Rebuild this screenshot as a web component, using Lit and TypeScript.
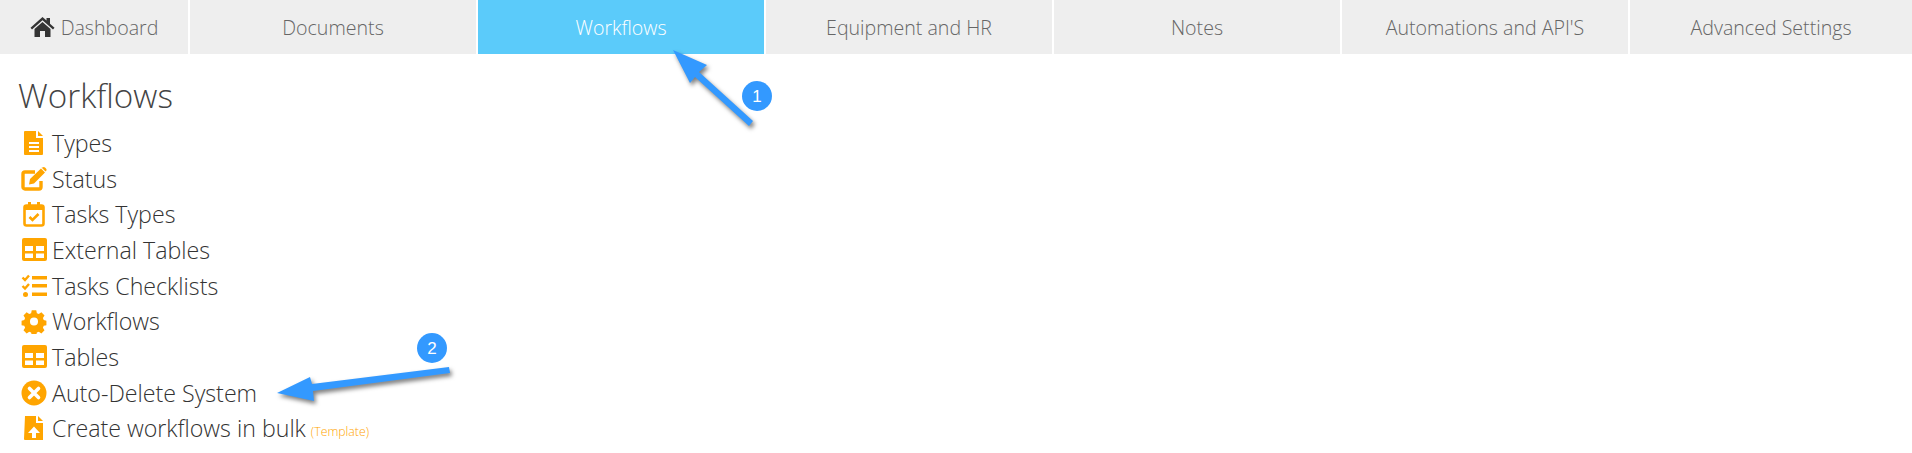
import { LitElement, html, css, svg } from "lit";
import { customElement } from "lit/decorators.js";

const I = (w: number, h: number, c: unknown) =>
  html`<svg class="ico" width=${w} height=${h} viewBox="0 0 ${w} ${h}">${c}</svg>`;

const fileLines = I(26, 26, svg`<path fill-rule="evenodd" d="M4 1h11v7h7v16a1 1 0 0 1-1 1H4a1 1 0 0 1-1-1V2a1 1 0 0 1 1-1zM8 12v2h10v-2zM8 16v2h10v-2zM8 20v2h10v-2z" fill="#ffa500"/><path d="M17 1l5 5h-5z" fill="#ffa500"/>`);
const edit = I(26, 26, svg`<path d="M20 15v6a2 2 0 0 1-2 2H4a2 2 0 0 1-2-2V8a2 2 0 0 1 2-2h10" fill="none" stroke="#ffa500" stroke-width="3.4"/><path d="M9 13L20 2.5l4 4L13 17.5l-5 1zM21.5 1.5a1.8 1.8 0 0 1 2.5 0l1 1a1.8 1.8 0 0 1 0 2.5l-.5.5-4-4z" fill="#ffa500"/>`);
const cal = I(26, 26, svg`<rect x="3.5" y="4.5" width="19" height="20" rx="2" fill="none" stroke="#ffa500" stroke-width="2.6"/><path d="M3 4h20v5H3z" fill="#ffa500"/><path d="M7 1h3v5H7zM16 1h3v5h-3z" fill="#ffa500"/><path d="M8.5 16l3 3 6-6" fill="none" stroke="#ffa500" stroke-width="2.6"/>`);
const table = I(26, 26, svg`<path fill-rule="evenodd" d="M3 1h21a2 2 0 0 1 2 2v19a2 2 0 0 1-2 2H3a2 2 0 0 1-2-2V3a2 2 0 0 1 2-2zM4 9v5h8V9zm11 0v5h8V9zM4 16.500v4.500h8v-4.500zm11 0v4.500h8v-4.500z" fill="#ffa500"/>`);
const checks = I(26, 26, svg`<path d="M1.500 4.500l2.500 2.500 4-4.500M1.500 13l2.500 2.500 4-4.500" fill="none" stroke="#ffa500" stroke-width="2.4"/><circle cx="4.500" cy="21.500" r="2.500" fill="#ffa500"/><path d="M11 3h15v3.500H11zM11 11h15v3.500H11zM11 19.500h15V23H11z" fill="#ffa500"/>`);
const gear = I(26, 26, svg`<path fill-rule="evenodd" d="M10.500 1h5l.7 3.300 2.100.9 2.900-1.800 3.500 3.500-1.800 2.900.9 2.100 3 .7v5l-3 .7-.9 2.100 1.800 2.900-3.500 3.500-2.900-1.800-2.100.9-.7 2.900h-5l-.7-2.900-2.100-.9-2.900 1.800-3.500-3.500 1.800-2.900-.9-2.100-3-.7v-5l3-.7.9-2.100-1.800-2.900 3.500-3.500 2.900 1.800 2.100-.9zM13 9a4.500 4.500 0 1 0 0 9 4.500 4.500 0 0 0 0-9z" fill="#ffa500" transform="translate(1.300 1.300) scale(.9)"/>`);
const xcircle = I(26, 26, svg`<circle cx="13" cy="13" r="12.500" fill="#ffa500"/><path d="M8.500 8.500l9 9M17.500 8.500l-9 9" stroke="#fff" stroke-width="3.600" stroke-linecap="round"/>`);
const fileUp = I(26, 26, svg`<path fill-rule="evenodd" d="M4 1h11v7h7v17H4a1 1 0 0 1-1-1zM13 11.500l-6 6.500h4v5h4v-5h4z" fill="#ffa500"/><path d="M17 1l5 5h-5z" fill="#ffa500"/>`);

const items: [unknown, string][] = [
  [fileLines, "Types"],
  [edit, "Status"],
  [cal, "Tasks Types"],
  [table, "External Tables"],
  [checks, "Tasks Checklists"],
  [gear, "Workflows"],
  [table, "Tables"],
  [xcircle, "Auto-Delete System"],
  [fileUp, "Create workflows in bulk"],
];

@customElement("app-root")
export class AppRoot extends LitElement {
  static styles = css`
    :host {
      display: block;
      position: relative;
      width: 1912px;
      height: 453px;
      overflow: hidden;
      background: #fff;
      font-family: "Open Sans", "Noto Sans", sans-serif;
      font-weight: 300;
      color: #333;
    }
    .tabs {
      display: grid;
      grid-template-columns: 188px repeat(5, 286px) 1fr;
      column-gap: 2px;
      height: 54px;
    }
    .tab {
      background: #eeeeee;
      color: #666;
      display: flex;
      align-items: center;
      justify-content: center;
      font-size: 19.6px;
      gap: 6px;
    }
    .tab.active {
      background: #5bcbfa;
      color: #fff;
    }
    .home {
      display: block;
    }
    .main {
      padding: 16px 0 0 18px;
    }
    h1 {
      margin: 0;
      font-size: 33.3px;
      font-weight: 300;
      line-height: 50px;
      color: #444;
    }
    .list {
      margin-top: 5px;
    }
    .row {
      display: flex;
      align-items: center;
      height: 35.7px;
      font-size: 23.2px;
      color: #333;
      white-space: nowrap;
    }
    .ico {
      display: block;
      flex: none;
      margin: 0 5px 0 3px;
    }
    .tpl {
      font-size: 12.3px;
      color: #ffa500;
      margin: 6px 0 0 5px;
    }
    .marks {
      position: absolute;
      left: 0;
      top: 0;
      pointer-events: none;
    }
    .arrow {
      filter: drop-shadow(2px 3px 2px rgba(0, 0, 0, 0.5));
    }
    .num {
      fill: #fff;
      font-family: "Liberation Sans", sans-serif;
      font-size: 17px;
      text-anchor: middle;
    }
  `;

  render() {
    const tabs = ["Documents", "Workflows", "Equipment and HR", "Notes", "Automations and API'S", "Advanced Settings"];
    return html`
      <div class="tabs">
        <div class="tab">
          <svg class="home" width="25" height="20" viewBox="0 0 25 20">
            <path d="M12.500 0l4 3.600V1h3.500v5.800l4.500 4-1.500 1.700L12.500 3.200 2 12.500.5 10.800z" fill="#333"/>
            <path d="M12.500 5l8 7v8h-5.500v-6h-5v6H4.500v-8z" fill="#333"/>
          </svg>
          <span>Dashboard</span>
        </div>
        ${tabs.map((t) => html`<div class="tab ${t === "Workflows" ? "active" : ""}">${t}</div>`)}
      </div>
      <div class="main">
        <h1>Workflows</h1>
        <div class="list">
          ${items.map(
            ([icon, label], i) => html`<div class="row">
              ${icon}<span>${label}</span>${i === 8 ? html`<span class="tpl">(Template)</span>` : ""}
            </div>`
          )}
        </div>
      </div>
      <svg class="marks" width="1912" height="453" viewBox="0 0 1912 453">
        <g class="arrow">
          <path d="M673 50L707 65 699 72 753 121 749 126 695 77 690 83z" fill="#3399ff"/>
        </g>
        <circle cx="757" cy="96" r="15" fill="#3399ff"/>
        <text class="num" x="757" y="102">1</text>
        <g class="arrow">
          <path d="M277 393L310 377 312 384 449 367 450 373 313 391 314 401z" fill="#3399ff"/>
        </g>
        <circle cx="432" cy="348" r="15" fill="#3399ff"/>
        <text class="num" x="432" y="354">2</text>
      </svg>
    `;
  }
}
